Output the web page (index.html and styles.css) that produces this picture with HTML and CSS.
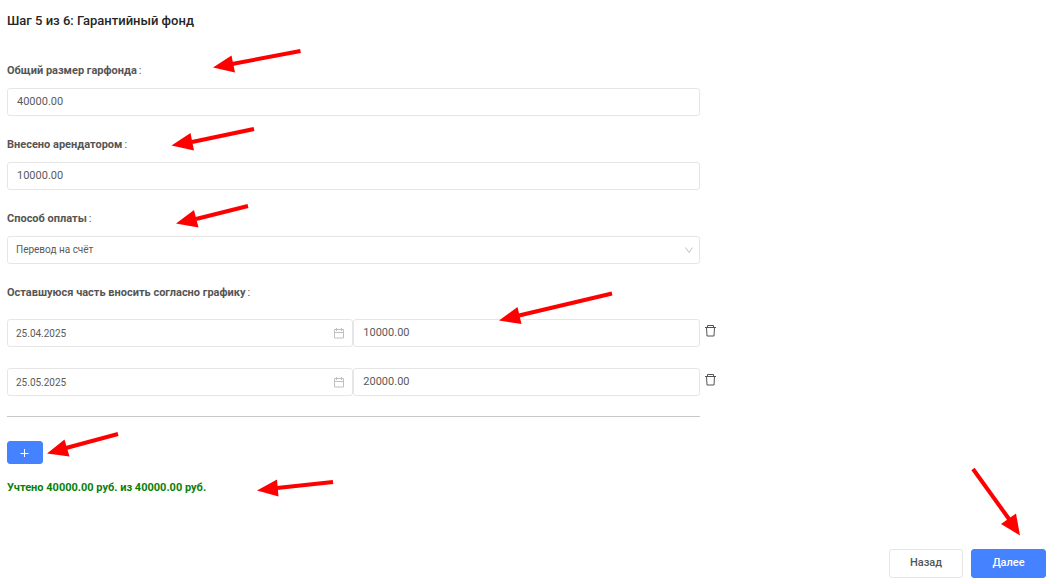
FILE: index.html
```html
<!DOCTYPE html>
<html lang="ru">
<head>
<meta charset="utf-8">
<meta name="viewport" content="width=device-width, initial-scale=1">
<title>Гарантийный фонд</title>
<link rel="stylesheet" href="styles.css">
</head>
<body>
<svg class="defs" aria-hidden="true">
  <symbol id="calendar" viewBox="0 0 12 12">
    <path d="M1.5 2.500h9v8.500h-9zM1.500 5.500h9M3.500 1v3M8.500 1v3" fill="none" stroke="currentColor"/>
  </symbol>
  <symbol id="trash" viewBox="0 0 13 13">
    <path d="M1 3.500h11M3.500 3.500v-2h6v2M2.500 3.500l.5 8.500h7l.5-8.500" fill="none" stroke="currentColor"/>
  </symbol>
</svg>
<form class="step">
  <h1 class="step-title">Шаг 5 из 6: Гарантийный фонд</h1>

  <div class="column">
    <div class="field">
      <label class="label" for="total">Общий размер гарфонда</label>
      <input class="control" id="total" type="text" value="40000.00">
    </div>
    <div class="field">
      <label class="label" for="paid">Внесено арендатором</label>
      <input class="control" id="paid" type="text" value="10000.00">
    </div>
    <div class="field">
      <label class="label" for="method">Способ оплаты</label>
      <div class="with-icon">
        <select class="control compact" id="method"><option>Перевод на счёт</option></select>
        <svg class="icon chevron" viewBox="0 0 10 10"><path d="M1.500 2.500l3.500 5 3.500-5" fill="none" stroke="currentColor"/></svg>
      </div>
    </div>

    <fieldset class="schedule">
      <legend class="label">Оставшуюся часть вносить согласно графику</legend>
      <div class="payment">
        <div class="with-icon">
          <input class="control compact" type="text" value="25.04.2025" aria-label="Дата платежа 1">
          <svg class="icon calendar"><use href="#calendar"/></svg>
        </div>
        <input class="control" type="text" value="10000.00" aria-label="Сумма платежа 1">
        <button class="remove" type="button" aria-label="Удалить платёж 1"><svg class="trash"><use href="#trash"/></svg></button>
      </div>
      <div class="payment">
        <div class="with-icon">
          <input class="control compact" type="text" value="25.05.2025" aria-label="Дата платежа 2">
          <svg class="icon calendar"><use href="#calendar"/></svg>
        </div>
        <input class="control" type="text" value="20000.00" aria-label="Сумма платежа 2">
        <button class="remove" type="button" aria-label="Удалить платёж 2"><svg class="trash"><use href="#trash"/></svg></button>
      </div>
    </fieldset>

    <hr class="divider">
    <button class="button primary add" type="button" aria-label="Добавить платёж">
      <svg class="plus" viewBox="0 0 10 10"><path d="M4.500 1v8M.5 5.500h8" stroke="currentColor"/></svg>
    </button>
    <p class="summary">Учтено 40000.00 руб. из 40000.00 руб.</p>
  </div>

  <div class="actions">
    <button class="button" type="button">Назад</button>
    <button class="button primary" type="submit">Далее</button>
    <svg class="arrow-next" viewBox="970 466 54 70" aria-hidden="true">
      <path class="shaft" d="M973 469L1009 519"/><path class="head" d="M1020 535.500L1001 524 1016 513.500z"/>
    </svg>
  </div>

  <svg class="arrows" viewBox="0 0 640 510" aria-hidden="true">
    <path class="shaft" d="M300.500 51L232 64M254 129L192 142M248 206L196 219M612 293.500L519 315.500M118 434L66 448M333 482L277 488"/>
    <path class="head" d="M213 67.500L231.500 55.500 235 72.500zM171.500 145.500L190.500 133 194 150.500zM176 223.500L194 210 198.500 227.500zM499 320.500L517.500 307 521.500 324zM47 453.500L64.500 439.500 69.500 456.500zM257 490.500L277 479.500 278.500 496.500z"/>
  </svg>
</form>
</body>
</html>
```
FILE: styles.css
```css
* { box-sizing: border-box; }

body {
  margin: 0;
  background: #fff;
  color: #555;
  font: 11px/24px Roboto, sans-serif;
}

.defs { display: none; }

.step {
  position: relative;
  display: flex;
  flex-direction: column;
  min-height: 100vh;
  padding: 9px 12px 6px 7px;
}

.step-title {
  margin: 0 0 26px;
  color: #262626;
  font-size: 13px;
  font-weight: 500;
  line-height: 24px;
}

.column { width: 66.667%; }

.field { margin-bottom: 17px; }

.label {
  display: block;
  margin-bottom: 5px;
  padding: 0;
  font-weight: 700;
}

.label::after {
  content: ":";
  margin-left: 2px;
  font-weight: 400;
}

.control {
  display: block;
  width: 100%;
  min-width: 0;
  height: 28px;
  padding: 0 9px 2px;
  border: 1px solid #e6e6e6;
  border-radius: 3px;
  background: #fff;
  color: #5a5a5a;
  font: inherit;
  appearance: none;
}

.compact {
  padding: 0 8px;
  font-size: 10px;
}

.with-icon { position: relative; }

.icon {
  position: absolute;
  top: 50%;
  transform: translateY(-50%);
  color: #bfbfbf;
  pointer-events: none;
}

.chevron { right: 6px; width: 10px; height: 10px; }
.calendar { right: 8px; width: 12px; height: 12px; }

.schedule {
  min-width: 0;
  margin: 0;
  padding: 0;
  border: 0;
}

.schedule .label { margin-bottom: 14px; }

.payment {
  position: relative;
  display: grid;
  grid-template-columns: 1fr 1fr;
  margin-bottom: 21px;
}

.payment:last-child { margin-bottom: 20px; }

.remove {
  position: absolute;
  top: 5px;
  left: 100%;
  display: flex;
  margin-left: 4px;
  padding: 0;
  border: 0;
  background: none;
  color: #555;
}

.trash { width: 13px; height: 13px; }

.divider {
  margin: 0 0 24px;
  border: 0;
  border-top: 1px solid #c8c8c8;
}

.button {
  display: flex;
  align-items: center;
  justify-content: center;
  min-width: 74px;
  height: 29px;
  padding: 0 18px 2px;
  border: 1px solid #e6e6e6;
  border-radius: 3px;
  background: #fff;
  color: #555;
  font: inherit;
  font-weight: 500;
}

.primary {
  min-width: 75px;
  border-color: #4582ff;
  background: #4582ff;
  color: #fff;
}

.add {
  min-width: 36px;
  height: 23px;
  padding: 0 12px;
}

.plus { width: 10px; height: 10px; }

.summary {
  margin: 12px 0 0;
  color: #0a800a;
  font-weight: 700;
}

.actions {
  position: relative;
  display: flex;
  justify-content: flex-end;
  gap: 8px;
  margin-top: auto;
}

.arrows,
.arrow-next {
  position: absolute;
  pointer-events: none;
}

.arrows { top: 0; left: 0; width: 640px; height: 510px; }
.arrow-next { right: 22px; bottom: 42px; width: 54px; height: 70px; }
.shaft { fill: none; stroke: #f00; stroke-width: 4; }
.head { fill: #f00; }
```
